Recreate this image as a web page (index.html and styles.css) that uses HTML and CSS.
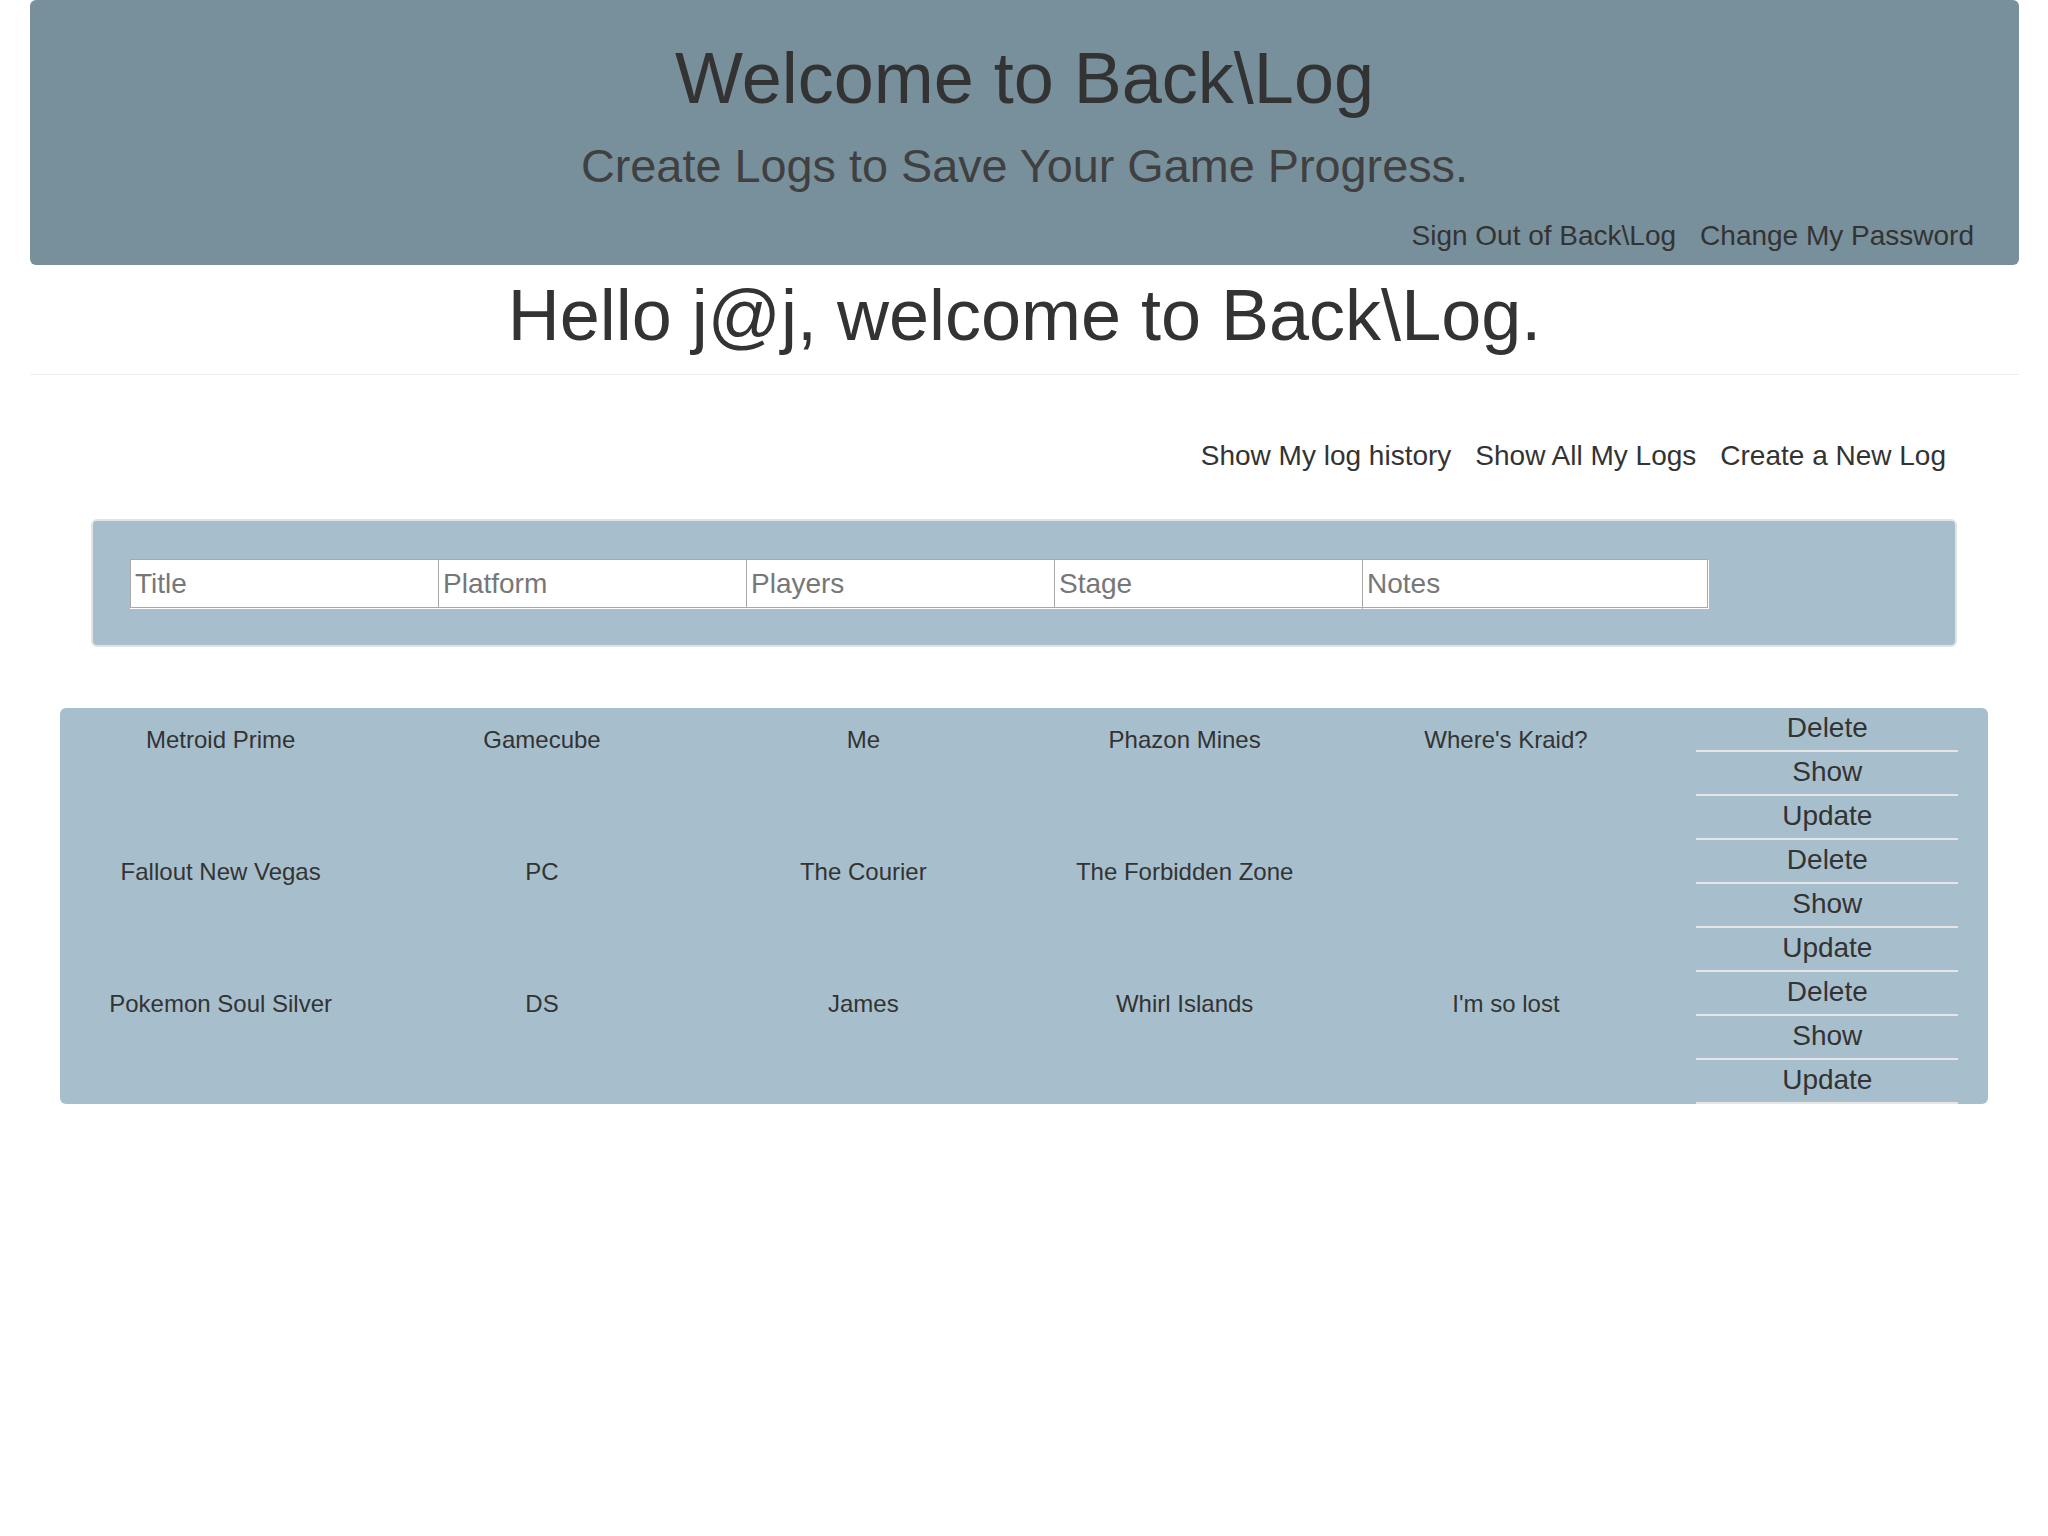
FILE: index.html
```html
<!DOCTYPE html>
<html lang="en">
<head>
<meta charset="utf-8">
<title>Back\Log</title>
<link rel="stylesheet" href="styles.css">
</head>
<body>
<div class="page">
  <header class="jumbotron">
    <h1 class="jumbo-title">Welcome to Back\Log</h1>
    <p class="jumbo-lead">Create Logs to Save Your Game Progress.</p>
    <nav class="account-links">
      <a href="#">Sign Out of Back\Log</a>
      <a href="#">Change My Password</a>
    </nav>
  </header>

  <h1 class="greeting">Hello j@j, welcome to Back\Log.</h1>
  <hr class="divider">

  <nav class="log-links">
    <a href="#">Show My log history</a>
    <a href="#">Show All My Logs</a>
    <a href="#">Create a New Log</a>
  </nav>

  <form class="well">
    <div class="field-row">
      <input class="field" type="text" placeholder="Title">
      <input class="field" type="text" placeholder="Platform">
      <input class="field" type="text" placeholder="Players">
      <input class="field" type="text" placeholder="Stage">
      <input class="field field-wide" type="text" placeholder="Notes">
    </div>
  </form>

  <div class="logs-wrap">
    <table class="logs">
      <tbody>
        <tr>
          <td>Metroid Prime</td>
          <td>Gamecube</td>
          <td>Me</td>
          <td>Phazon Mines</td>
          <td>Where's Kraid?</td>
          <td class="actions">
            <button class="action" type="button">Delete</button>
            <button class="action" type="button">Show</button>
            <button class="action" type="button">Update</button>
          </td>
        </tr>
        <tr>
          <td>Fallout New Vegas</td>
          <td>PC</td>
          <td>The Courier</td>
          <td>The Forbidden Zone</td>
          <td></td>
          <td class="actions">
            <button class="action" type="button">Delete</button>
            <button class="action" type="button">Show</button>
            <button class="action" type="button">Update</button>
          </td>
        </tr>
        <tr>
          <td>Pokemon Soul Silver</td>
          <td>DS</td>
          <td>James</td>
          <td>Whirl Islands</td>
          <td>I'm so lost</td>
          <td class="actions">
            <button class="action" type="button">Delete</button>
            <button class="action" type="button">Show</button>
            <button class="action" type="button">Update</button>
          </td>
        </tr>
      </tbody>
    </table>
  </div>
</div>
</body>
</html>
```

FILE: styles.css
```css
* {
  box-sizing: border-box;
}

html, body {
  margin: 0;
  padding: 0;
  background: #ffffff;
}

body {
  font-family: "Liberation Sans", Arial, Helvetica, sans-serif;
  color: #333333;
}

a {
  color: #333333;
  text-decoration: none;
}

.page {
  padding: 0 29px 0 30px;
}

/* ---------- header ---------- */
.jumbotron {
  background: #78909c;
  border-radius: 6px;
  height: 265px;
  padding-top: 38px;
  text-align: center;
}

.jumbo-title {
  margin: 0;
  font-size: 72px;
  line-height: 80px;
  font-weight: 400;
  color: #333333;
}

.jumbo-lead {
  margin: 21px 0 0;
  font-size: 46.8px;
  line-height: 54px;
  color: #404040;
}

.account-links {
  margin-top: 27px;
  padding-right: 45px;
  display: flex;
  justify-content: flex-end;
  gap: 24px;
  font-size: 28px;
  line-height: 32px;
}

/* ---------- greeting ---------- */
.greeting {
  margin: 10px 0 0;
  font-size: 72px;
  line-height: 80px;
  font-weight: 400;
  text-align: center;
  color: #333333;
}

.divider {
  margin: 19px 0 0;
  border: 0;
  border-top: 1px solid #eeeeee;
  height: 0;
}

.log-links {
  margin-top: 65px;
  padding-right: 73px;
  display: flex;
  justify-content: flex-end;
  gap: 24px;
  font-size: 28px;
  line-height: 32px;
}

/* ---------- form well ---------- */
.well {
  margin: 47px 62px 0 61px;
  height: 128px;
  padding: 38px 37px 0;
  background: #a7bfcc;
  border: 2px solid #e3e3e3;
  border-radius: 6px;
}

.field-row {
  display: flex;
}

.field {
  width: 308px;
  height: 49px;
  margin: 0;
  padding: 0 4px;
  font-family: "Liberation Sans", Arial, Helvetica, sans-serif;
  font-size: 28px;
  color: #333333;
  background: #ffffff;
  border: 1px solid #a9a9a9;
  border-right: 0;
  border-radius: 0;
  box-shadow: 0 1px 0 #ffffff;
  outline: none;
}

.field-wide {
  width: 346px;
  border-right: 1px solid #a9a9a9;
  box-shadow: 1px 1px 0 #ffffff;
}

.field::placeholder {
  color: #777777;
  opacity: 1;
}

/* ---------- log table ---------- */
.logs-wrap {
  margin-top: 61px;
  padding: 0 31px 0 30px;
}

.logs {
  width: 100%;
  table-layout: fixed;
  border-collapse: separate;
  border-spacing: 0;
  background: #a7bfcc;
  border-radius: 6px;
}

.logs td {
  padding: 15px 6px 0;
  vertical-align: top;
  text-align: center;
  font-size: 24px;
  line-height: 34px;
  color: #333333;
}

.logs td.actions {
  padding: 0;
}

.action {
  display: block;
  width: 262px;
  margin: 0 auto;
  padding: 4px 0 6px;
  font-family: "Liberation Sans", Arial, Helvetica, sans-serif;
  font-size: 28px;
  line-height: 32px;
  color: #333333;
  background: transparent;
  border: 0;
  border-bottom: 2px solid #e6e6e6;
  border-radius: 0;
  cursor: pointer;
}
```
